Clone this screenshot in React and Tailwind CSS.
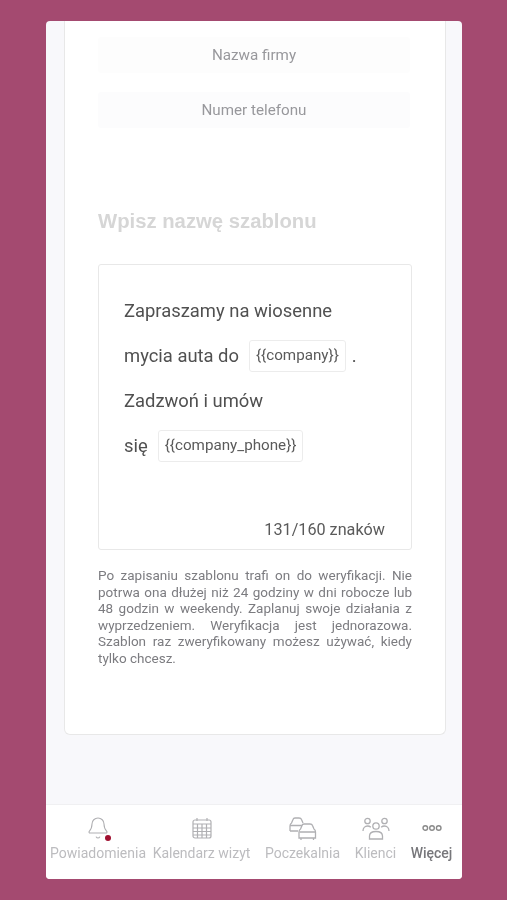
import { Bell } from 'lucide-react';

const FONT = 'font-["Roboto",sans-serif]';

function CalendarGridIcon() {
  return (
    <svg width="20" height="22" viewBox="0 0 20 22" fill="none" stroke="currentColor" strokeWidth="1.2">
      <rect x="1" y="3" width="18" height="18" rx="2" />
      <path d="M5 1v3M15 1v3M1 7h18M1 11h18M1 14.5h18M1 18h18M5.5 7v14M10 7v14M14.5 7v14" />
    </svg>
  );
}

function CarsIcon() {
  return (
    <svg width="29" height="23" viewBox="0 0 29 23" fill="none" stroke="currentColor" strokeWidth="1.3">
      <path d="M2 14V9q0-2 1.500-3L5 2.500Q5.500 1 7 1h4q2 0 2.500 1.500L15 6" />
      <path d="M2 8.500h13M2 14h8" />
      <path d="M11 21v-6q0-2 1.500-3L14 8.500Q14.500 7 16 7h6q2 0 2.500 1.500L26 12q1.500 1 1.500 3v6z" fill="#fff" />
      <path d="M11.500 15h16M13 21v2M25.500 21v2" />
    </svg>
  );
}

function PeopleIcon() {
  return (
    <svg width="28" height="23" viewBox="0 0 28 23" fill="none" stroke="currentColor" strokeWidth="1.3">
      <circle cx="5.500" cy="4" r="2.700" />
      <circle cx="22.500" cy="4" r="2.700" />
      <circle cx="14" cy="9" r="3.200" />
      <path d="M1 14c0-3 2-5 4.500-5 1.300 0 2.500.5 3.300 1.300M27 14c0-3-2-5-4.500-5-1.300 0-2.500.5-3.300 1.300" />
      <path d="M7.500 22v-3c0-3 3-4.500 6.500-4.500s6.500 1.500 6.500 4.500v3z" />
    </svg>
  );
}

function DotsIcon() {
  return (
    <svg width="20" height="8" viewBox="0 0 20 8" fill="none" stroke="currentColor" strokeWidth="1.4">
      <circle cx="3.300" cy="4" r="2.300" />
      <circle cx="10" cy="4" r="2.300" />
      <circle cx="16.700" cy="4" r="2.300" />
    </svg>
  );
}

const NAV = [
  { label: 'Powiadomienia', cls: 'ml-[5px] w-[94px]', icon: <Bell size={24} strokeWidth={1.1} />, dot: true },
  { label: 'Kalendarz wizyt', cls: 'ml-[8px] w-[97px]', icon: <CalendarGridIcon /> },
  { label: 'Poczekalnia', cls: 'ml-[15px] w-[75px]', icon: <CarsIcon /> },
  { label: 'Klienci', cls: 'ml-[15px] w-[41px]', icon: <PeopleIcon /> },
  { label: 'Więcej', cls: 'ml-[15px] w-[41px]', icon: <DotsIcon />, active: true },
];

function Chip({ children }) {
  return (
    <span className="inline-flex h-[32px] items-center rounded-[3px] border border-[#ececec] bg-white px-[6px] text-[15.2px] text-[#5a5a5a]">
      {children}
    </span>
  );
}

export default function App() {
  return (
    <div className={`${FONT} h-[900px] overflow-hidden bg-[#a44a70] px-[46px] pt-[21px]`}>
      <div className="flex h-[858px] w-[416px] flex-col overflow-hidden rounded-[4px] bg-[#f8f8fb] blur-[0.4px]">
        <div className="flex-1 pl-[18px] pr-[16px]">
          <div className="h-[714px] rounded-b-[6px] border-x border-b border-[#e8e8e8] bg-white px-[33px] pt-[16px]">
            <div className="flex h-[36px] w-[312px] items-center justify-center rounded-[3px] bg-[#fdfdfd] text-[15.2px] text-[#98989c]">
              Nazwa firmy
            </div>
            <div className="mt-[19px] flex h-[36px] w-[312px] items-center justify-center rounded-[3px] bg-[#fcfcfd] text-[15.2px] text-[#98989c]">
              Numer telefonu
            </div>
            <h2 className='mt-[80px] font-["Liberation_Sans",sans-serif] text-[20.3px] font-bold leading-[26px] text-[#d6d6d6]'>
              Wpisz nazwę szablonu
            </h2>
            <div className="mt-[30px] flex h-[286px] w-[314px] flex-col rounded-[3px] border border-[#e8e8e8] px-[25px] pt-[24px] text-[18.4px] text-[#505050]">
              <div className="flex h-[44px] items-center">Zapraszamy na wiosenne</div>
              <div className="flex h-[45px] items-center gap-[10px]">
                mycia auta do <Chip>{'{{company}}'}</Chip> <span className="ml-[-4px]">.</span>
              </div>
              <div className="flex h-[45px] items-center">Zadzwoń i umów</div>
              <div className="flex h-[45px] items-center gap-[10px]">
                się <Chip>{'{{company_phone}}'}</Chip>
              </div>
              <div className="mt-auto mb-[7px] mr-[1px] text-right text-[16.2px] text-[#5a5a5a]">131/160 znaków</div>
            </div>
            <p className="mt-[17px] w-[314px] text-justify text-[13.5px] leading-[16.6px] text-[#7c7c80]">
              Po zapisaniu szablonu trafi on do weryfikacji. Nie potrwa ona dłużej niż 24 godziny w dni robocze lub 48 godzin w weekendy. Zaplanuj swoje działania z wyprzedzeniem. Weryfikacja jest jednorazowa. Szablon raz zweryfikowany możesz używać, kiedy tylko chcesz.
            </p>
          </div>
        </div>
        <nav className="flex h-[75px] items-start border-t border-[#f0f0f2] bg-white pt-[10px]">
          {NAV.map((item) => (
            <div key={item.label} className={`flex ${item.cls} shrink-0 flex-col items-center`}>
              <div className={`relative flex h-[26px] items-center justify-center ${item.active ? 'text-[#8a8a8a]' : 'text-[#b0b0b3]'}`}>
                {item.icon}
                {item.dot && <span className="absolute bottom-[0px] right-[-1px] h-[6px] w-[6px] rounded-full bg-[#a01030]" />}
              </div>
              <span className={`mt-[4px] whitespace-nowrap text-[14px] leading-[16px] ${item.active ? 'font-medium text-[#77777b]' : 'text-[#bcbcbf]'}`}>
                {item.label}
              </span>
            </div>
          ))}
        </nav>
      </div>
    </div>
  );
}
